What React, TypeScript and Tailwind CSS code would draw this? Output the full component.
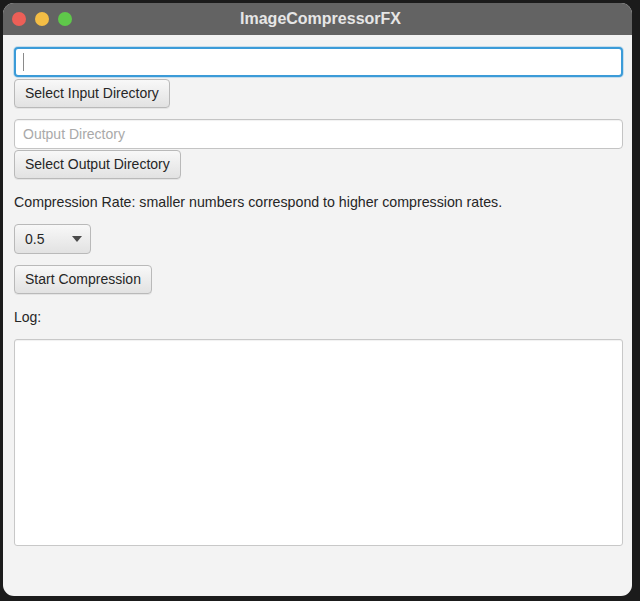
const font = { fontFamily: '"Liberation Sans", Arial, sans-serif' }

function FxButton({ label }: { label: string }) {
  return (
    <button className="h-[29px] self-start rounded-[4px] border border-[#b9b9b9] bg-gradient-to-b from-[#f8f8f8] to-[#e2e2e2] px-[10px] text-[14px] text-[#262626] shadow-[0_1px_0_rgba(0,0,0,0.06)]">
      {label}
    </button>
  )
}

export default function App() {
  return (
    <div className="h-[601px] w-[640px] bg-[#1b1b1b] p-[3px] pr-[8px] pb-[5px]" style={font}>
      <div className="flex h-full flex-col overflow-hidden rounded-[11px] bg-[#f3f3f3]">
        {/* title bar */}
        <div className="relative flex h-[32px] shrink-0 items-center bg-[#636363]">
          <div className="flex items-center gap-[9px] pl-[9px]">
            <span className="h-[14px] w-[14px] rounded-full bg-[#ec5f57]" />
            <span className="h-[14px] w-[14px] rounded-full bg-[#f3bd45]" />
            <span className="h-[14px] w-[14px] rounded-full bg-[#5fc84a]" />
          </div>
          <div className="absolute inset-0 flex items-center justify-center pl-[6px] text-[16px] font-bold text-[#e6e6e6]">
            ImageCompressorFX
          </div>
        </div>

        <div className="flex flex-1 flex-col pl-[11px] pr-[9px] pt-[12px]">
          <div className="flex h-[30px] items-center rounded-[4px] border-2 border-[#3b9bd8] bg-white px-[7px] shadow-[0_0_0_1px_rgba(59,155,216,0.25)]">
            <span className="h-[18px] w-px bg-[#8a8a8a]" />
          </div>
          <div className="mt-[2px] flex">
            <FxButton label="Select Input Directory" />
          </div>

          <div className="mt-[11px] flex h-[30px] items-center rounded-[4px] border border-[#c4c4c4] bg-white px-[8px] text-[14px] text-[#a9a9a9] shadow-[inset_0_1px_1px_rgba(0,0,0,0.06)]">
            Output Directory
          </div>
          <div className="mt-px flex">
            <FxButton label="Select Output Directory" />
          </div>

          <p className="mt-[14px] text-[14.2px] leading-[18px] text-[#262626]">
            Compression Rate: smaller numbers correspond to higher compression rates.
          </p>

          <div className="mt-[13px] flex">
            <div className="flex h-[30px] w-[77px] items-center justify-between rounded-[4px] border border-[#b9b9b9] bg-gradient-to-b from-[#f8f8f8] to-[#e2e2e2] pl-[10px] pr-[8px] text-[14px] text-[#262626]">
              <span>0.5</span>
              <svg width="10" height="6" viewBox="0 0 10 6">
                <path d="M0 0 L10 0 L5 6 Z" fill="#4a4a4a" />
              </svg>
            </div>
          </div>

          <div className="mt-[11px] flex">
            <FxButton label="Start Compression" />
          </div>

          <p className="mt-[14px] text-[14px] leading-[18px] text-[#262626]">Log:</p>

          <div className="mt-[13px] h-[207px] rounded-[3px] border border-[#c8c8c8] bg-white shadow-[inset_0_1px_1px_rgba(0,0,0,0.06)]" />
        </div>
      </div>
    </div>
  )
}
